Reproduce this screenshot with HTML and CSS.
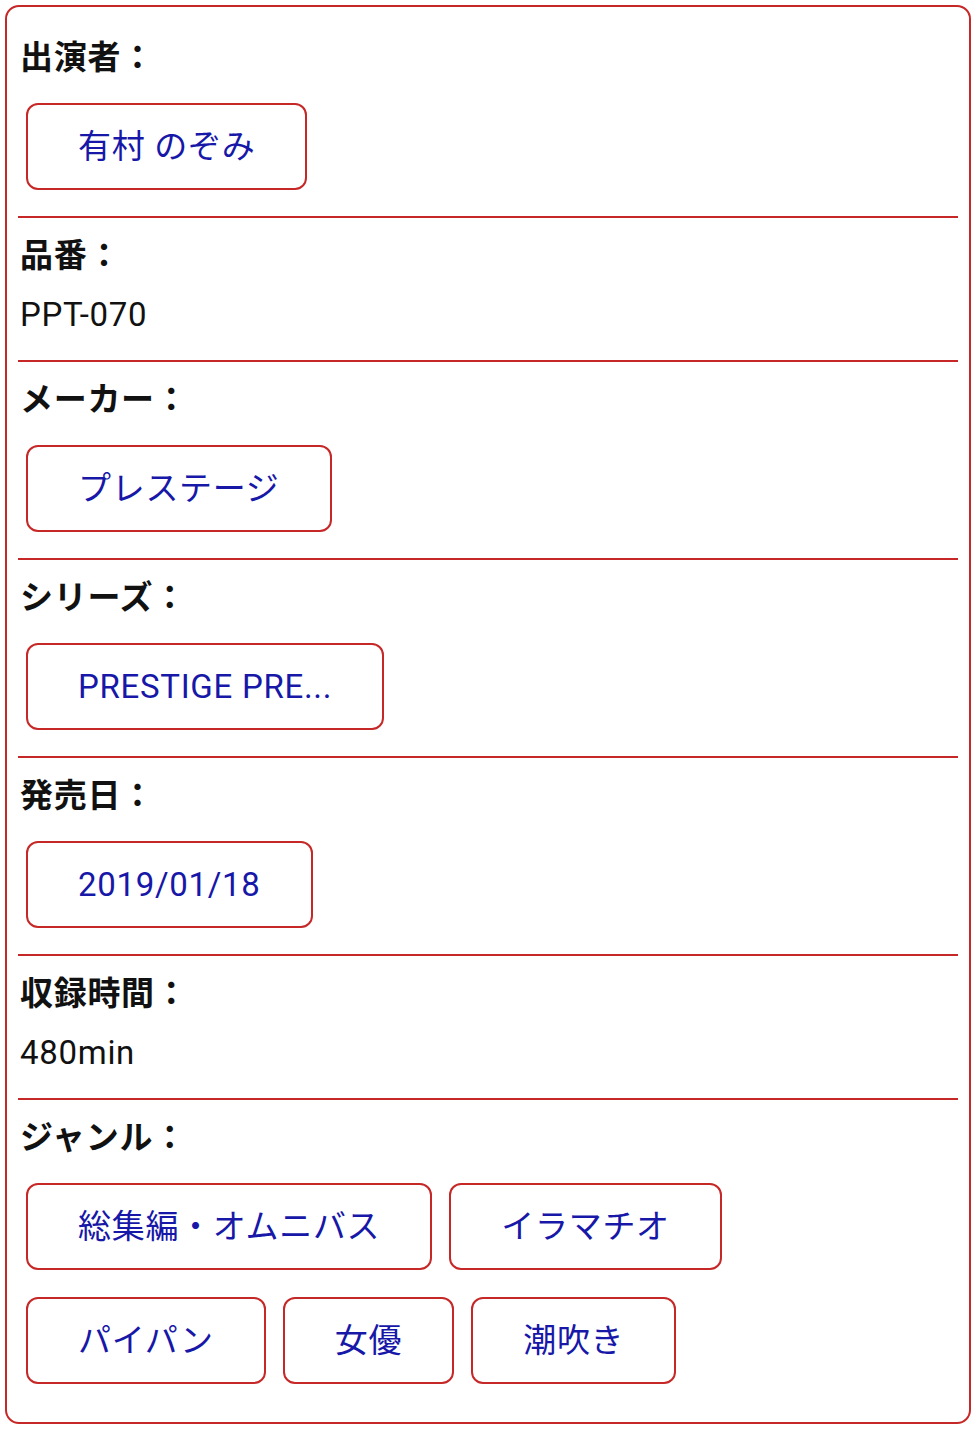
FILE: index.html
```html
<!DOCTYPE html>
<html lang="ja">
<head>
    <meta charset="UTF-8">
    <meta name="viewport" content="width=device-width, initial-scale=1.0">
    <title>作品情報</title>
    <link rel="stylesheet" href="styles.css">
</head>
<body>
    <div class="info">
        <div class="row">
            <p class="label">出演者：</p>
            <div class="tags">
                <a class="tag" href="#">有村 のぞみ</a>
            </div>
        </div>
        <div class="row">
            <p class="label">品番：</p>
            <p class="value">PPT-070</p>
        </div>
        <div class="row">
            <p class="label">メーカー：</p>
            <div class="tags">
                <a class="tag" href="#">プレステージ</a>
            </div>
        </div>
        <div class="row">
            <p class="label">シリーズ：</p>
            <div class="tags">
                <a class="tag" href="#">PRESTIGE PRE...</a>
            </div>
        </div>
        <div class="row">
            <p class="label">発売日：</p>
            <div class="tags">
                <a class="tag" href="#">2019/01/18</a>
            </div>
        </div>
        <div class="row">
            <p class="label">収録時間：</p>
            <p class="value">480min</p>
        </div>
        <div class="row">
            <p class="label">ジャンル：</p>
            <div class="tags">
                <a class="tag" href="#">総集編・オムニバス</a>
                <a class="tag" href="#">イラマチオ</a>
                <a class="tag" href="#">パイパン</a>
                <a class="tag" href="#">女優</a>
                <a class="tag" href="#">潮吹き</a>
            </div>
        </div>
    </div>
</body>
</html>
```

FILE: styles.css
```css
body {
    margin: 0;
    background-color: #FFFFFF;
    color: #111111;
    font-family: Roboto, "Noto Sans CJK JP", sans-serif;
    font-size: 33px;
    letter-spacing: 0.7px;
}

div.info {
    margin: 5px 8px 6px 5px;
    padding: 13px 11px 12px;
    border: 2px solid #C62828;
    border-radius: 14px;
}

div.row {
    padding: 16px 2px 26px;
    border-bottom: 2px solid #C62828;
}

div.row:last-child {
    border-bottom: none;
}

p.label {
    margin: 0;
    line-height: 44px;
    font-weight: bold;
    color: #111111;
}

p.value {
    margin: 15px 0 -3px;
    line-height: 44px;
}

div.tags {
    display: flex;
    flex-wrap: wrap;
    gap: 27px 17px;
    margin: 23px 0 0 6px;
}

a.tag {
    display: block;
    padding: 18px 50px;
    line-height: 47px;
    border: 2px solid #C62828;
    border-radius: 12px;
    color: #1717A8;
    text-decoration: none;
    white-space: nowrap;
}
```
